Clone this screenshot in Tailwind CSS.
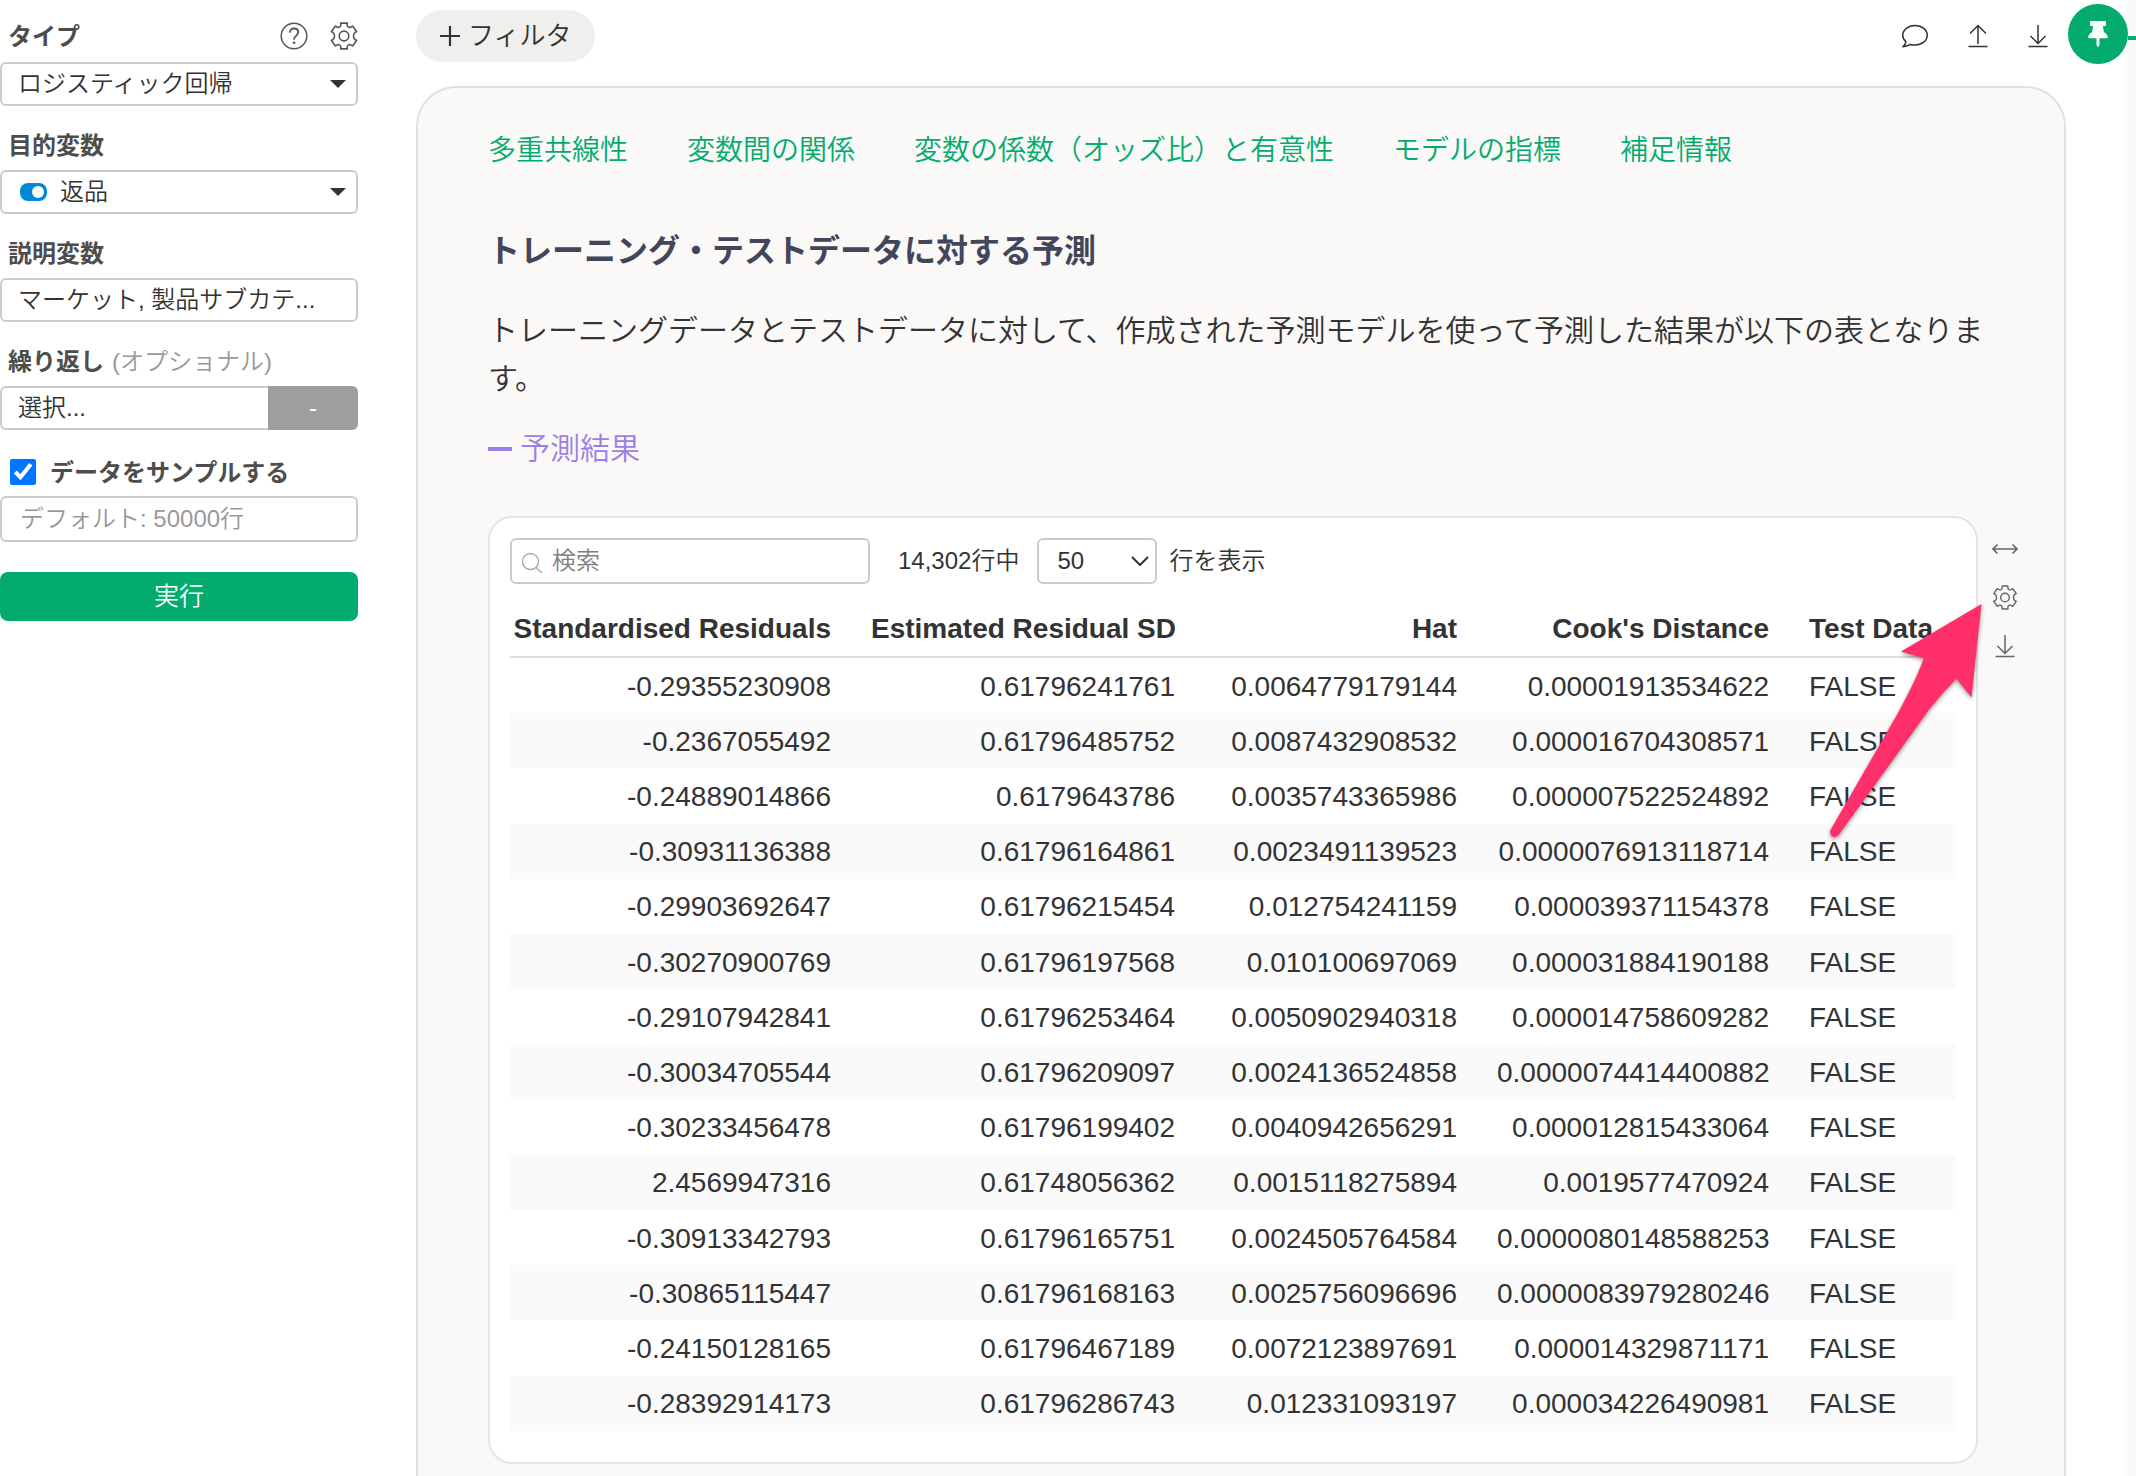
<!DOCTYPE html>
<html lang="ja">
<head>
<meta charset="utf-8">
<meta name="viewport" content="width=device-width, initial-scale=1">
<title>ロジスティック回帰</title>
<script src="https://cdn.jsdelivr.net/npm/@tailwindcss/browser@4"></script>
</head>
<body class="relative flex min-h-screen bg-white font-['Liberation_Sans','Noto_Sans_CJK_JP',sans-serif] text-2xl font-[350] text-[#333]">
  <svg class="hidden" aria-hidden="true">
    <symbol id="gear" viewBox="0 0 26 26">
      <g fill="none" stroke="currentColor" stroke-width="1.5" stroke-linejoin="round">
        <path d="M10 1h6v1.800c0 1.800 1.800 2.800 3.300 1.900l1.700-.9 3.700 5.200-1.300.6c-1.600 1-1.600 2.500-1.600 3.400s0 2.400 1.600 3.400l1.300.6-3.700 5.200-1.700-.9c-1.500-.9-3.300.1-3.300 1.900V25h-6v-1.800c0-1.800-1.800-2.800-3.300-1.900l-1.700.9L1.300 17l1.300-.6c1.600-1 1.600-2.500 1.600-3.400s0-2.400-1.600-3.400L1.300 9 5 3.800l1.700.9C8.200 5.600 10 4.600 10 2.800z"/>
        <circle cx="13" cy="13" r="4.500"/>
      </g>
    </symbol>
    <symbol id="download" viewBox="0 0 20 24">
      <path d="M10 1v18M2.500 12l7.500 7.500 7.500-7.500M.5 22.500h19" fill="none" stroke="currentColor" stroke-width="1.5"/>
    </symbol>
    <symbol id="caret" viewBox="0 0 16 8"><path d="M0 0h16L8 8z" fill="currentColor"/></symbol>
  </svg>

  <div class="absolute inset-y-0 right-0 w-3 bg-[#fafafa]"></div>

  <aside class="w-[358px] shrink-0 pt-[18px]">
    <div class="mb-2 flex h-9 items-center pl-2">
      <label for="type" class="pt-[2px] font-bold text-[#4d4d4d]">タイプ</label>
      <button class="ml-auto" aria-label="ヘルプ">
        <svg class="h-7 w-7 text-[#555]" viewBox="0 0 28 28" fill="none" stroke="currentColor" stroke-width="1.500">
          <circle cx="14" cy="14" r="12.800"/>
          <path d="M9.800 10.800c0-2.700 1.800-4.300 4.300-4.300s4.200 1.500 4.200 3.800c0 3.400-4.200 3.300-4.200 7v.4" stroke-width="1.800"/>
          <circle cx="14.100" cy="20.800" r="1.300" fill="currentColor" stroke="none"/>
        </svg>
      </button>
      <button class="ml-[22px]" aria-label="設定"><svg class="h-7 w-7 text-[#555]"><use href="#gear"/></svg></button>
    </div>
    <div class="relative">
      <select id="type" class="block h-11 w-full appearance-none rounded-md border-2 border-[#ccc] bg-white pl-4">
        <option>ロジスティック回帰</option>
      </select>
      <svg class="pointer-events-none absolute top-[18px] right-3 h-2 w-4"><use href="#caret"/></svg>
    </div>

    <label for="target" class="mt-[22px] mb-[6px] flex h-9 items-center pl-2 font-bold text-[#4d4d4d]">目的変数</label>
    <div class="relative">
      <select id="target" class="block h-11 w-full appearance-none rounded-md border-2 border-[#ccc] bg-white pl-[58px]">
        <option>返品</option>
      </select>
      <svg class="pointer-events-none absolute top-[13px] left-5 h-[18px] w-[27px]" viewBox="0 0 27 18">
        <rect width="27" height="18" rx="8" fill="#0288d8"/><circle cx="18" cy="9" r="6" fill="#fff"/>
      </svg>
      <svg class="pointer-events-none absolute top-[18px] right-3 h-2 w-4"><use href="#caret"/></svg>
    </div>

    <label for="predictors" class="mt-[22px] mb-[6px] flex h-9 items-center pl-2 font-bold text-[#4d4d4d]">説明変数</label>
    <button id="predictors" class="block h-11 w-full truncate rounded-md border-2 border-[#ccc] bg-white pl-4 text-left leading-10">マーケット, 製品サブカテ...</button>

    <label for="repeat" class="mt-[22px] mb-[6px] flex h-9 items-center gap-2 pl-2 font-bold text-[#4d4d4d]">繰り返し <span class="font-[350] text-[#999]">(オプショナル)</span></label>
    <div class="flex h-11">
      <button id="repeat" class="flex-1 rounded-l-md border-2 border-r-0 border-[#ccc] bg-white pl-4 text-left leading-10">選択...</button>
      <button class="w-[90px] rounded-r-md bg-[#9e9e9e] text-white" aria-label="解除">-</button>
    </div>

    <div class="mt-6 mb-[6px] flex h-9 items-center gap-[14px] pl-[10px]">
      <input id="sample" type="checkbox" checked class="h-[26px] w-[26px] accent-[#0075ff]">
      <label for="sample" class="pt-[2px] font-bold text-[#4d4d4d]">データをサンプルする</label>
    </div>
    <input type="text" aria-label="サンプル行数" placeholder="デフォルト: 50000行" class="block h-[46px] w-full rounded-md border-2 border-[#ccc] bg-white pl-[18px] placeholder:text-[#999]">
    <button class="mt-[30px] block h-[49px] w-full rounded-lg bg-[#03ab6d] text-[25px] text-white">実行</button>
  </aside>

  <main class="relative flex min-w-0 flex-1 flex-col pl-[58px]">
    <header class="flex h-[86px] items-start">
      <button class="mt-[10px] flex h-[52px] items-center gap-2 rounded-full bg-[#efefed] px-6 text-[26px]">
        <svg class="h-5 w-5" viewBox="0 0 20 20"><path d="M10 0v20M0 10h20" stroke="currentColor" stroke-width="2.200"/></svg>
        フィルタ
      </button>
      <div class="ml-auto flex pt-1 pr-2">
        <button class="mr-[3px] flex h-16 w-15 items-center justify-center" aria-label="コメント">
          <svg class="h-6 w-7" viewBox="0 0 28 24" fill="none" stroke="currentColor" stroke-width="1.500" stroke-linejoin="round"><path d="M14 1.500c6.900 0 12.300 4.300 12.300 9.800S20.900 21 14 21c-1.700 0-3.300-.3-4.800-.6-2 1.400-4.500 2.300-7.400 2.300 1.600-1.400 2.900-3.200 3.100-4.900C2.800 16 1.700 13.800 1.700 11.300c0-5.500 5.500-9.800 12.300-9.800z"/></svg>
        </button>
        <button class="flex h-16 w-15 items-center justify-center" aria-label="アップロード">
          <svg class="h-6 w-5" viewBox="0 0 20 24" fill="none" stroke="currentColor" stroke-width="1.500"><path d="M10 20V1.500M2 9.500l8-8 8 8M.5 22.500h19"/></svg>
        </button>
        <button class="flex h-16 w-15 items-center justify-center" aria-label="ダウンロード"><svg class="h-6 w-5"><use href="#download"/></svg></button>
        <button class="flex h-15 w-15 items-center justify-center rounded-full bg-[#03ab6d] text-white" aria-label="ピン留め">
          <svg class="h-7 w-5" viewBox="0 0 20 28" fill="currentColor"><path d="M3 1h14a1 1 0 0 1 1 1v3a1 1 0 0 1-1 1h-2l.8 6c2.200 1 3.700 3 4 5 .1.800-.3 1.200-1 1.200H11.500V25L10 27.500 8.500 25v-6.800H1.200c-.7 0-1.100-.4-1-1.200.3-2 1.800-4 4-5L5 6H3a1 1 0 0 1-1-1V2a1 1 0 0 1 1-1z"/></svg>
        </button>
      </div>
      <div class="absolute top-9 right-0 h-1 w-2 bg-[#03ab6d]"></div>
    </header>

    <section class="mr-[70px] flex-1 rounded-t-[40px] border-2 border-b-0 border-[#e0e0e0] bg-[#faf9f7] pt-[43px] pr-8 pb-3 pl-[70px]">
      <nav class="flex gap-[59px] text-[28px] leading-10 whitespace-nowrap text-[#03ab6d]">
        <a href="#">多重共線性</a>
        <a href="#">変数間の関係</a>
        <a href="#">変数の係数（オッズ比）と有意性</a>
        <a href="#">モデルの指標</a>
        <a href="#">補足情報</a>
      </nav>
      <h2 class="mt-14 text-[32px] leading-12 font-bold text-[#43465a]">トレーニング・テストデータに対する予測</h2>
      <p class="mt-8 mr-6 text-3xl leading-12">トレーニングデータとテストデータに対して、作成された予測モデルを使って予測した結果が以下の表となります。</p>
      <button class="mt-[26px] flex items-center gap-2 text-3xl leading-10 text-[#9b7fe8]">
        <span class="h-1 w-6 bg-[#9b7fe8]"></span>予測結果
      </button>

      <div class="mt-[47px] flex">
        <div class="min-w-0 flex-1 rounded-3xl border-2 border-[#e5e5e5] bg-white px-5 pt-5 pb-[31px]">
          <div class="flex h-[46px] items-center">
            <div class="relative">
              <input type="search" aria-label="検索" placeholder="検索" class="block h-[46px] w-[360px] rounded-md border-2 border-[#ccc] bg-white pl-10 placeholder:text-[#808080]">
              <svg class="pointer-events-none absolute top-[14px] left-[11px] h-[22px] w-[22px] text-[#aaa]" viewBox="0 0 22 22" fill="none" stroke="currentColor" stroke-width="1.400"><circle cx="9.500" cy="9.500" r="8"/><path d="M15 15.500l6 5.500"/></svg>
            </div>
            <span class="ml-7">14,302行中</span>
            <div class="relative ml-[18px]">
              <select aria-label="表示行数" class="block h-[46px] w-[120px] appearance-none rounded-md border-2 border-[#ccc] bg-white pl-[18px]"><option>50</option></select>
              <svg class="pointer-events-none absolute top-[18px] right-2 h-[10px] w-[18px]" viewBox="0 0 18 10" fill="none" stroke="currentColor" stroke-width="2"><path d="M1 1l8 8 8-8"/></svg>
            </div>
            <span class="ml-3">行を表示</span>
          </div>

          <table class="mt-4 h-[831px] w-full table-fixed border-separate border-spacing-0 text-right text-[28px] leading-8 whitespace-nowrap [&_td]:pt-3 [&_td]:pr-10 [&_td]:pb-[10px] [&_td:last-child]:pr-0 [&_td:last-child]:text-left [&_th]:border-b-2 [&_th]:border-[#ddd] [&_th]:pt-[13px] [&_th]:pr-10 [&_th]:pb-[11px] [&_th:last-child]:pr-0 [&_th:last-child]:text-left">
            <colgroup><col class="w-[361px]"><col class="w-[344px]"><col class="w-[282px]"><col class="w-[312px]"><col></colgroup>
            <thead>
              <tr><th>Standardised Residuals</th><th>Estimated Residual SD</th><th>Hat</th><th>Cook's Distance</th><th>Test Data</th></tr>
            </thead>
            <tbody class="[&>tr:nth-child(even)]:bg-[#fafafa]">
              <tr><td>-0.29355230908</td><td>0.61796241761</td><td>0.0064779179144</td><td>0.00001913534622</td><td>FALSE</td></tr>
              <tr><td>-0.2367055492</td><td>0.61796485752</td><td>0.0087432908532</td><td>0.000016704308571</td><td>FALSE</td></tr>
              <tr><td>-0.24889014866</td><td>0.6179643786</td><td>0.0035743365986</td><td>0.000007522524892</td><td>FALSE</td></tr>
              <tr><td>-0.30931136388</td><td>0.61796164861</td><td>0.0023491139523</td><td>0.0000076913118714</td><td>FALSE</td></tr>
              <tr><td>-0.29903692647</td><td>0.61796215454</td><td>0.012754241159</td><td>0.000039371154378</td><td>FALSE</td></tr>
              <tr><td>-0.30270900769</td><td>0.61796197568</td><td>0.010100697069</td><td>0.000031884190188</td><td>FALSE</td></tr>
              <tr><td>-0.29107942841</td><td>0.61796253464</td><td>0.0050902940318</td><td>0.000014758609282</td><td>FALSE</td></tr>
              <tr><td>-0.30034705544</td><td>0.61796209097</td><td>0.0024136524858</td><td>0.0000074414400882</td><td>FALSE</td></tr>
              <tr><td>-0.30233456478</td><td>0.61796199402</td><td>0.0040942656291</td><td>0.000012815433064</td><td>FALSE</td></tr>
              <tr><td>2.4569947316</td><td>0.61748056362</td><td>0.0015118275894</td><td>0.0019577470924</td><td>FALSE</td></tr>
              <tr><td>-0.30913342793</td><td>0.61796165751</td><td>0.0024505764584</td><td>0.0000080148588253</td><td>FALSE</td></tr>
              <tr><td>-0.30865115447</td><td>0.61796168163</td><td>0.0025756096696</td><td>0.0000083979280246</td><td>FALSE</td></tr>
              <tr><td>-0.24150128165</td><td>0.61796467189</td><td>0.0072123897691</td><td>0.000014329871171</td><td>FALSE</td></tr>
              <tr><td>-0.28392914173</td><td>0.61796286743</td><td>0.012331093197</td><td>0.000034226490981</td><td>FALSE</td></tr>
            </tbody>
          </table>
        </div>

        <div class="relative flex w-[54px] flex-col items-center gap-6 pt-[21px] text-[#666]">
          <button aria-label="幅を広げる"><svg class="block h-6 w-[26px]" viewBox="0 0 26 24" fill="none" stroke="currentColor" stroke-width="1.600"><path d="M1 12h24M5.500 7.500L1 12l4.500 4.500M20.500 7.500L25 12l-4.500 4.500"/></svg></button>
          <button aria-label="設定"><svg class="block h-[25px] w-[26px]"><use href="#gear"/></svg></button>
          <button aria-label="ダウンロード"><svg class="block h-6 w-5"><use href="#download"/></svg></button>
          <!-- Callout arrow pointing at the settings button -->
          <svg class="pointer-events-none absolute top-[84px] right-[46px] h-[244px] w-40 drop-shadow-[0_2px_2px_rgba(0,0,0,0.4)]" viewBox="0 0 160 244" aria-hidden="true">
            <path d="M155.500 4L75 51.500 97.700 58.300Q92 76 72 113L4.500 230Q3 234 6.500 236.500Q10 238 13 234.500Q60 170 102 111Q115 94 130.300 78.700L145.500 97.500z" fill="#ff2f6c"/>
          </svg>
        </div>
      </div>
    </section>
  </main>
</body>
</html>
